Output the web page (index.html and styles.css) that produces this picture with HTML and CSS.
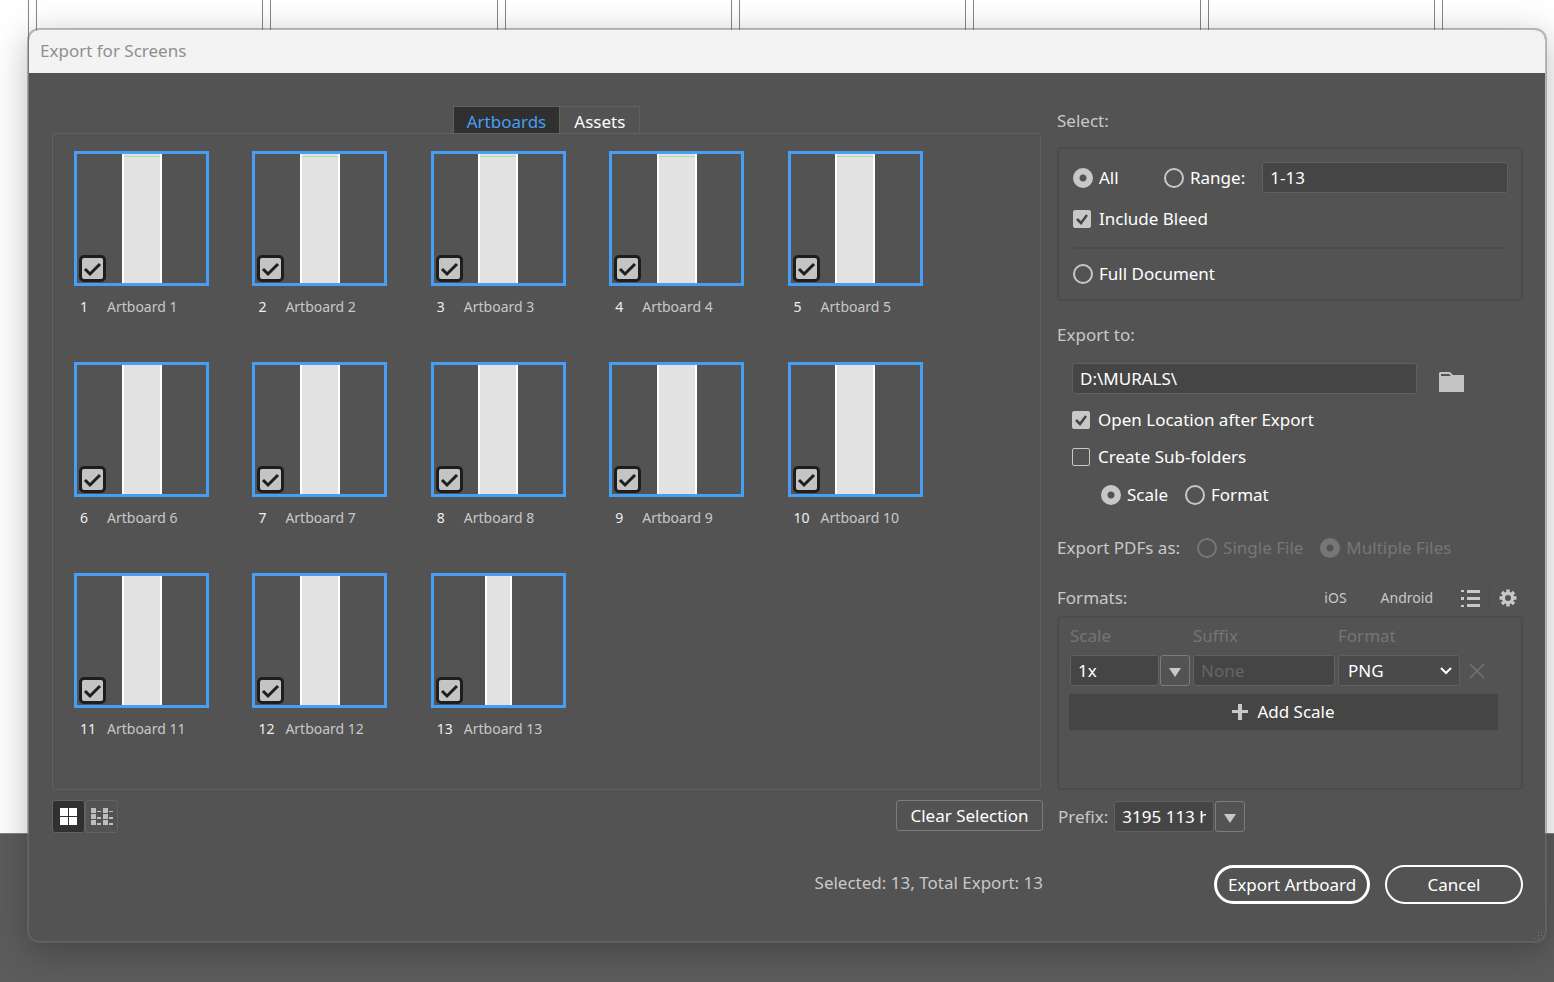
FILE: index.html
```html
<!DOCTYPE html>
<html lang="en">
<head>
  <meta charset="UTF-8">
  <meta name="viewport" content="width=device-width, initial-scale=1.0">
  <title>Export for Screens</title>
  <link rel="stylesheet" href="styles.css">
</head>
<body>
  <div class="canvas">
    <div class="sheet sheet-first"></div>
    <div class="sheet"></div>
    <div class="sheet"></div>
    <div class="sheet"></div>
    <div class="sheet"></div>
    <div class="sheet"></div>
    <div class="sheet"></div>
    <div class="sheet sheet-last"></div>
  </div>

  <main class="dialog">
    <h1 class="title-bar">Export for Screens</h1>
    <form class="dialog-body" id="exportForm">
      <div class="columns">
        <section class="left">
          <div class="tabs">
            <button type="button" class="tab active">Artboards</button>
            <button type="button" class="tab">Assets</button>
          </div>
          <div class="artboards">
            <div class="card">
              <div class="thumb"><div class="page marked"></div><input type="checkbox" id="a1" checked></div>
              <label for="a1"><span class="num">1</span>Artboard 1</label>
            </div>
            <div class="card">
              <div class="thumb"><div class="page marked"></div><input type="checkbox" id="a2" checked></div>
              <label for="a2"><span class="num">2</span>Artboard 2</label>
            </div>
            <div class="card">
              <div class="thumb"><div class="page marked"></div><input type="checkbox" id="a3" checked></div>
              <label for="a3"><span class="num">3</span>Artboard 3</label>
            </div>
            <div class="card">
              <div class="thumb"><div class="page marked"></div><input type="checkbox" id="a4" checked></div>
              <label for="a4"><span class="num">4</span>Artboard 4</label>
            </div>
            <div class="card">
              <div class="thumb"><div class="page marked"></div><input type="checkbox" id="a5" checked></div>
              <label for="a5"><span class="num">5</span>Artboard 5</label>
            </div>
            <div class="card">
              <div class="thumb"><div class="page"></div><input type="checkbox" id="a6" checked></div>
              <label for="a6"><span class="num">6</span>Artboard 6</label>
            </div>
            <div class="card">
              <div class="thumb"><div class="page"></div><input type="checkbox" id="a7" checked></div>
              <label for="a7"><span class="num">7</span>Artboard 7</label>
            </div>
            <div class="card">
              <div class="thumb"><div class="page"></div><input type="checkbox" id="a8" checked></div>
              <label for="a8"><span class="num">8</span>Artboard 8</label>
            </div>
            <div class="card">
              <div class="thumb"><div class="page"></div><input type="checkbox" id="a9" checked></div>
              <label for="a9"><span class="num">9</span>Artboard 9</label>
            </div>
            <div class="card">
              <div class="thumb"><div class="page"></div><input type="checkbox" id="a10" checked></div>
              <label for="a10"><span class="num">10</span>Artboard 10</label>
            </div>
            <div class="card">
              <div class="thumb"><div class="page"></div><input type="checkbox" id="a11" checked></div>
              <label for="a11"><span class="num">11</span>Artboard 11</label>
            </div>
            <div class="card">
              <div class="thumb"><div class="page"></div><input type="checkbox" id="a12" checked></div>
              <label for="a12"><span class="num">12</span>Artboard 12</label>
            </div>
            <div class="card">
              <div class="thumb"><div class="page narrow"></div><input type="checkbox" id="a13" checked></div>
              <label for="a13"><span class="num">13</span>Artboard 13</label>
            </div>
          </div>
          <div class="toolbar">
            <div class="views">
              <button type="button" class="view active" aria-label="Thumbnail view">
                <svg width="18" height="18" viewBox="0 0 18 18" fill="#fff"><path d="M0 0h8v8H0zM9 0h8v8H9zM0 9h8v8H0zM9 9h8v8H9z"/></svg>
              </button>
              <button type="button" class="view" aria-label="List view">
                <svg width="22" height="18" viewBox="0 0 22 18" fill="#bebebe"><path d="M0 0h5v5H0zM0 6h5v5H0zM0 12h5v5H0zM12 0h5v5h-5zM12 6h5v5h-5zM12 12h5v5h-5zM6 3h4v1H6zM6 9h4v2H6zM6 15h4v2H6zM18 3h4v1h-4zM18 9h4v2h-4zM18 15h4v2h-4z"/></svg>
              </button>
            </div>
            <button type="button" class="clear">Clear Selection</button>
          </div>
        </section>

        <section class="right">
          <h2>Select:</h2>
          <div class="group select-group">
            <div class="row">
              <label class="option all"><input type="radio" name="select" checked>All</label>
              <label class="option"><input type="radio" name="select">Range:</label>
              <input type="text" class="field range" aria-label="Range" value="1-13">
            </div>
            <label class="option bleed"><input type="checkbox" checked>Include Bleed</label>
            <hr>
            <label class="option"><input type="radio" name="select">Full Document</label>
          </div>

          <h2 class="export-title">Export to:</h2>
          <div class="export-to">
            <div class="row">
              <input type="text" class="field path" aria-label="Export to" value="D:\MURALS\">
              <button type="button" class="folder" aria-label="Choose folder">
                <svg width="25" height="20" viewBox="0 0 25 20"><path fill="#c4c4c4" d="M1 0h10l3 3h11v17H0V1z"/><path fill="#535353" d="M2 2h8l2 2H2z"/></svg>
              </button>
            </div>
            <label class="option"><input type="checkbox" checked>Open Location after Export</label>
            <label class="option"><input type="checkbox">Create Sub-folders</label>
            <div class="row sub">
              <label class="option"><input type="radio" name="folders" checked>Scale</label>
              <label class="option"><input type="radio" name="folders">Format</label>
            </div>
          </div>

          <div class="row pdfs">
            <h2>Export PDFs as:</h2>
            <label class="option disabled"><input type="radio" name="pdf" disabled>Single File</label>
            <label class="option disabled"><input type="radio" name="pdf" checked disabled>Multiple Files</label>
          </div>

          <div class="row formats-head">
            <h2>Formats:</h2>
            <button type="button" class="preset">iOS</button>
            <button type="button" class="preset android">Android</button>
            <button type="button" class="icon" aria-label="Presets">
              <svg width="19" height="19" viewBox="0 0 19 19" fill="#c8c8c8"><path d="M0 1h3v2H0zM0 8h3v3H0zM0 16h3v2H0zM6 1h13v3H6zM6 8h13v3H6zM6 15h13v3H6z"/></svg>
            </button>
            <button type="button" class="icon gear" aria-label="Settings">
              <svg width="18" height="18" viewBox="0 0 18 18" fill="none" stroke="#c8c8c8"><circle cx="9" cy="9" r="4.600" stroke-width="3.200"/><path stroke-width="3.400" d="M9 .5v3M9 14.500v3M.5 9h3M14.500 9h3M3 3l2 2M13 13l2 2M3 15l2-2M13 5l2-2"/></svg>
            </button>
          </div>
          <div class="group formats">
            <div class="formats-grid">
              <label for="scale">Scale</label>
              <label for="suffix">Suffix</label>
              <label for="format">Format</label>
              <span></span>
              <div class="combo">
                <input type="text" class="field" id="scale" value="1x">
                <button type="button" aria-label="Scale options"><svg width="12" height="9" viewBox="0 0 12 9"><path fill="#c8c8c8" d="M0 0h12L6 9z"/></svg></button>
              </div>
              <input type="text" class="field" id="suffix" placeholder="None">
              <select id="format"><option>PNG</option><option>JPG</option><option>SVG</option><option>PDF</option></select>
              <button type="button" class="remove" aria-label="Remove scale">
                <svg width="16" height="16" viewBox="0 0 16 16" stroke="#737373" stroke-width="1.500"><path d="M1 1l14 14M15 1L1 15"/></svg>
              </button>
            </div>
            <button type="button" class="add">
              <svg width="16" height="16" viewBox="0 0 16 16" fill="#c8c8c8"><path d="M6 0h4v6h6v3h-6v7H6V9H0V6h6z"/></svg>
              Add Scale
            </button>
          </div>

          <div class="prefix">
            <label for="prefix">Prefix:</label>
            <div class="combo">
              <input type="text" class="field" id="prefix" value="3195 113 h">
              <button type="button" aria-label="Prefix options"><svg width="12" height="9" viewBox="0 0 12 9"><path fill="#c8c8c8" d="M0 0h12L6 9z"/></svg></button>
            </div>
          </div>
        </section>
      </div>

      <div class="footer">
        <p>Selected: 13, Total Export: 13</p>
        <div class="actions">
          <button type="submit" class="pill primary">Export Artboard</button>
          <button type="button" class="pill">Cancel</button>
        </div>
      </div>
    </form>
    <div class="grip"></div>
  </main>
</body>
</html>
```

FILE: styles.css
```css
* {
  box-sizing: border-box;
}
body {
  margin: 0;
  min-height: 100vh;
  padding: 28px 7px 39px 27px;
  display: flex;
  position: relative;
  overflow: hidden;
  background: #5c5c5c;
  color: #fff;
  font: 17px/28px "Noto Sans", sans-serif;
}
button, input, select {
  font: inherit;
  color: inherit;
  margin: 0;
}
button {
  padding: 0;
  border: none;
  background: none;
  cursor: pointer;
}
svg {
  display: block;
}

/* document behind the dialog */
.canvas {
  position: absolute;
  inset: 0 0 148px;
  display: flex;
  gap: 7px;
  background: #fff;
  border-bottom: 1px solid #858585;
}
.sheet {
  flex: 1;
  border: solid #858585;
  border-width: 0 1px;
}
.sheet-first {
  flex: 0 0 29px;
  border-left: none;
}
.sheet-last {
  flex: 0 0 112px;
  border-right: none;
}

.dialog {
  flex: 1;
  position: relative;
  display: flex;
  flex-direction: column;
  border: 2px solid rgba(109, 109, 109, 0.47);
  border-radius: 12px;
  background: #535353;
  background-clip: padding-box;
  box-shadow: 0 8px 36px rgba(0, 0, 0, 0.26);
}
.title-bar {
  margin: 0;
  padding: 0 11px 2px;
  border-radius: 10px 10px 0 0;
  background: #f3f3f3;
  color: #8f8f8f;
  font-size: 17px;
  font-weight: 400;
  line-height: 41px;
}
.dialog-body {
  flex: 1;
  display: flex;
  flex-direction: column;
  padding: 33px 22px 37px 23px;
}
.columns {
  flex: 1;
  display: grid;
  grid-template-columns: 1fr 466px;
  gap: 16px;
}
.left, .right {
  display: flex;
  flex-direction: column;
  min-width: 0;
}
.right {
  padding-top: 1px;
}

/* artboards */
.tabs {
  display: flex;
  justify-content: center;
}
.tab {
  height: 28px;
  padding: 1px 13px 0;
  border: 1px solid #616161;
  border-width: 1px 1px 0;
}
.tab + .tab {
  padding: 1px 14px 0;
  border-left: none;
}
.tab.active {
  background: #303030;
  color: #479ff5;
}
.artboards {
  flex: 1;
  display: grid;
  grid-template-columns: repeat(5, 1fr);
  grid-auto-rows: 211px;
  align-content: start;
  margin-top: -1px;
  padding: 17px 74px 0 21px;
  border: 1px solid #616161;
  border-radius: 3px;
}
.thumb {
  position: relative;
  display: flex;
  justify-content: center;
  width: 135px;
  height: 135px;
  border: 3px solid #479ff5;
}
.page {
  width: 40px;
  border: solid #fff;
  border-width: 0 2px;
  background: #e2e2e2;
}
.page.marked {
  padding-top: 2px;
}
.page.marked::before {
  content: "";
  display: block;
  height: 1px;
  background: #a5e6a0;
}
.page.narrow {
  width: 27px;
}
.thumb input {
  position: absolute;
  left: 2px;
  bottom: 1px;
  width: 27px;
  height: 27px;
  appearance: none;
  border: 3px solid #1e1e1e;
  border-radius: 5px;
  background: #c4c4c4;
}
.thumb input:checked {
  background: #c4c4c4 url("data:image/svg+xml,%3Csvg xmlns='http://www.w3.org/2000/svg' viewBox='0 0 21 21'%3E%3Cpath d='M3 11l5 5L18 6' fill='none' stroke='%231e1e1e' stroke-width='3'/%3E%3C/svg%3E");
}
.card label {
  display: flex;
  padding: 7px 0 0 6px;
  color: #c8c8c8;
  font-size: 14px;
}
.num {
  width: 27px;
  color: #eee;
}

.toolbar {
  display: flex;
  justify-content: space-between;
  margin: 10px -2px 0 0;
}
.views {
  display: flex;
}
.view {
  width: 33px;
  height: 33px;
  display: flex;
  justify-content: center;
  align-items: center;
  border: 1px solid #616161;
  border-radius: 3px;
}
.view.active {
  background: #303030;
}
.clear {
  width: 147px;
  height: 31px;
  border: 1px solid #7c7c7c;
  border-radius: 3px;
}

/* right side */
h2 {
  margin: 0;
  color: #c8c8c8;
  font-size: 17px;
  font-weight: 400;
}
.row {
  display: flex;
  align-items: center;
}
.group {
  margin-top: 12px;
  border: 2px solid #4c4c4c;
  border-radius: 4px;
}
.select-group {
  padding: 13px 13px 11px 14px;
}
.field {
  min-width: 0;
  height: 31px;
  padding: 0 7px;
  border: 1px solid #606060;
  border-radius: 3px;
  background: #454545;
}
.option {
  display: flex;
  align-items: center;
  gap: 6px;
  white-space: nowrap;
}
.option input {
  width: 20px;
  height: 20px;
  appearance: none;
  border: 2px solid #c8c8c8;
  border-radius: 50%;
}
.option input:checked {
  background: radial-gradient(circle, #535353 3px, #c8c8c8 4px);
}
.option input[type="checkbox"] {
  width: 18px;
  height: 18px;
  margin-right: 2px;
  border: 1px solid #c8c8c8;
  border-radius: 2px;
}
.option input[type="checkbox"]:checked {
  background: #c8c8c8 url("data:image/svg+xml,%3Csvg xmlns='http://www.w3.org/2000/svg' viewBox='0 0 16 16'%3E%3Cpath d='M3 8l4 4 6-8' fill='none' stroke='%23454545' stroke-width='2.500'/%3E%3C/svg%3E");
}
.option.disabled {
  color: #767676;
}
.option.disabled input {
  border-color: #767676;
}
.option.disabled input:checked {
  background: radial-gradient(circle, #535353 3px, #767676 4px);
}
.all {
  width: 91px;
}
.range {
  flex: 1;
  margin-left: 17px;
}
.bleed {
  margin-top: 12px;
}
hr {
  margin: 14px 0 11px;
  border: none;
  border-top: 2px solid #4c4c4c;
}
.export-title {
  margin-top: 20px;
}
.export-to {
  display: flex;
  flex-direction: column;
  gap: 9px;
  margin-top: 14px;
  padding-left: 15px;
}
.export-to > .row:first-child {
  margin-bottom: 3px;
}
.path {
  flex: 0 0 345px;
}
.folder {
  padding: 6px 0 0 22px;
}
.sub {
  gap: 17px;
  margin-top: 1px;
  padding-left: 29px;
}
.pdfs {
  gap: 17px;
  margin-top: 25px;
}
.formats-head {
  margin-top: 22px;
}
.formats-head h2 {
  margin-right: auto;
}
.preset {
  color: #c8c8c8;
  font-size: 14px;
}
.android {
  margin: 0 28px 0 34px;
}
.gear {
  margin-left: 9px;
  padding: 2px 6px 2px 9px;
  border-left: 1px solid #4a4a4a;
}
.formats {
  flex: 1;
  margin-top: 4px;
  padding: 4px 23px 0 10px;
}
.formats-grid {
  display: grid;
  grid-template-columns: 120px 142px 122px 28px;
  gap: 5px 3px;
  padding-left: 1px;
  color: #757575;
}
.formats-grid input, .formats-grid select {
  color: #fff;
}
.combo {
  display: flex;
  gap: 1px;
}
.combo .field {
  flex: 1;
}
.combo button {
  display: flex;
  flex: 0 0 30px;
  justify-content: center;
  align-items: center;
  padding-top: 3px;
  border: 1px solid #7c7c7c;
  border-radius: 3px;
}
::placeholder {
  color: #666;
}
select {
  height: 31px;
  padding: 0 9px;
  appearance: none;
  border: 1px solid #606060;
  border-radius: 3px;
  background: #4a4a4a url("data:image/svg+xml,%3Csvg xmlns='http://www.w3.org/2000/svg' width='12' height='8'%3E%3Cpath d='M1 1l5 5 5-5' fill='none' stroke='white' stroke-width='2'/%3E%3C/svg%3E") no-repeat right 7px center;
}
.remove {
  display: flex;
  align-items: center;
  justify-content: center;
}
.add {
  display: flex;
  justify-content: center;
  align-items: center;
  gap: 9px;
  width: 100%;
  height: 36px;
  margin-top: 8px;
  background: #454545;
}
.prefix {
  display: flex;
  align-items: center;
  gap: 6px;
  height: 33px;
  margin-top: 10px;
  padding-left: 1px;
  color: #c8c8c8;
}
.prefix .combo {
  width: 131px;
  height: 31px;
  color: #fff;
}
.prefix .field {
  padding-right: 7px;
}

.footer {
  display: grid;
  grid-template-columns: 1fr 466px;
  gap: 16px;
  margin-top: 32px;
}
.footer p {
  margin: 4px -2px 0 0;
  color: #c8c8c8;
  text-align: right;
}
.actions {
  display: flex;
  justify-content: flex-end;
  gap: 15px;
}
.pill {
  width: 138px;
  height: 39px;
  border: 2px solid #fff;
  border-radius: 20px;
}
.pill.primary {
  width: 156px;
  border-width: 3px;
}
.grip {
  position: absolute;
  right: 2px;
  bottom: 1px;
  width: 12px;
  height: 12px;
  background: radial-gradient(circle, #777 1px, transparent 1px) 0 0 / 3px 3px;
  clip-path: polygon(100% 0, 100% 70%, 70% 100%, 0 100%);
}
```
